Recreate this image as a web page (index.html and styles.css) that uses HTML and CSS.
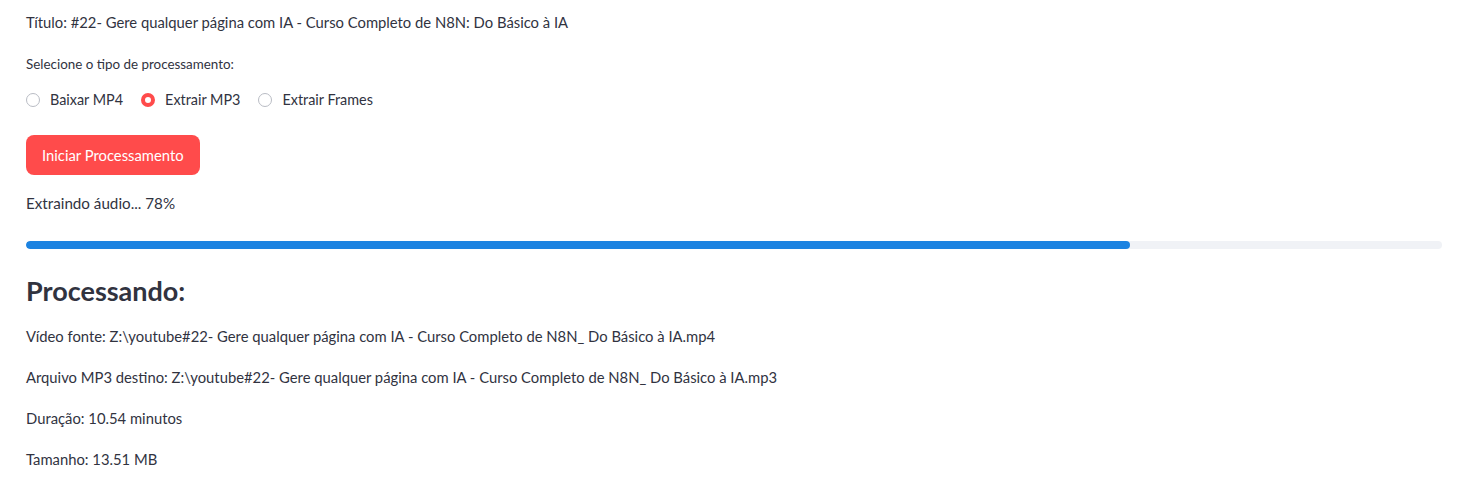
FILE: index.html
```html
<!DOCTYPE html>
<html lang="pt">
<head>
<meta charset="utf-8">
<title>Processamento</title>
<link rel="stylesheet" href="styles.css">
</head>
<body>
<main class="app">
  <p class="title">Título: #22- Gere qualquer página com IA - Curso Completo de N8N: Do Básico à IA</p>
  <p class="label">Selecione o tipo de processamento:</p>
  <div class="radios">
    <label class="radio"><span class="dot"></span><span>Baixar MP4</span></label>
    <label class="radio checked"><span class="dot"></span><span>Extrair MP3</span></label>
    <label class="radio"><span class="dot"></span><span>Extrair Frames</span></label>
  </div>
  <button class="btn">Iniciar Processamento</button>
  <p class="status">Extraindo áudio... 78%</p>
  <div class="progress"><div class="fill" style="width:78%"></div></div>
  <h3 class="heading">Processando:</h3>
  <p class="line first">Vídeo fonte: Z:\youtube#22- Gere qualquer página com IA - Curso Completo de N8N_ Do Básico à IA.mp4</p>
  <p class="line">Arquivo MP3 destino: Z:\youtube#22- Gere qualquer página com IA - Curso Completo de N8N_ Do Básico à IA.mp3</p>
  <p class="line">Duração: 10.54 minutos</p>
  <p class="line">Tamanho: 13.51 MB</p>
</main>
</body>
</html>
```

FILE: styles.css
```css
html, body {
  margin: 0;
  padding: 0;
  background: #ffffff;
}
body {
  font-family: Lato, "Open Sans", sans-serif;
  color: #31333f;
  font-size: 14.8px;
}
.app {
  width: 1416px;
  padding: 12px 0 0 26px;
  display: flex;
  flex-direction: column;
  align-items: flex-start;
}
p { margin: 0; }
.title {
  line-height: 20px;
}
.label {
  margin-top: 22px;
  font-size: 13.4px;
  line-height: 20px;
}
.radios {
  margin-top: 16px;
  display: flex;
  gap: 18px;
  height: 20px;
  align-items: center;
  font-size: 14.4px;
}
.radio {
  display: flex;
  align-items: center;
  gap: 10px;
  line-height: 20px;
}
.dot {
  box-sizing: border-box;
  width: 14px;
  height: 14px;
  border-radius: 50%;
  border: 1px solid #b9bcc4;
  background: #fff;
}
.radio.checked .dot {
  border: 4px solid #ff4b4b;
  background: #fff;
}
.btn {
  margin-top: 25px;
  height: 40px;
  padding: 0 16px;
  border: none;
  border-radius: 8px;
  background: #ff4b4b;
  color: #fff;
  font-family: inherit;
  font-size: 14.8px;
}
.status {
  margin-top: 18px;
  font-size: 15.2px;
  line-height: 20px;
}
.progress {
  margin-top: 28px;
  width: 100%;
  height: 8px;
  border-radius: 4px;
  background: #f0f2f6;
  overflow: hidden;
}
.fill {
  height: 100%;
  background: #1c83e1;
  border-radius: 4px;
}
.heading {
  margin: 26px 0 0;
  font-size: 27px;
  font-weight: 700;
  line-height: 32px;
}
.line {
  line-height: 20px;
  margin-top: 21px;
}
.line.first {
  margin-top: 19px;
}
```
